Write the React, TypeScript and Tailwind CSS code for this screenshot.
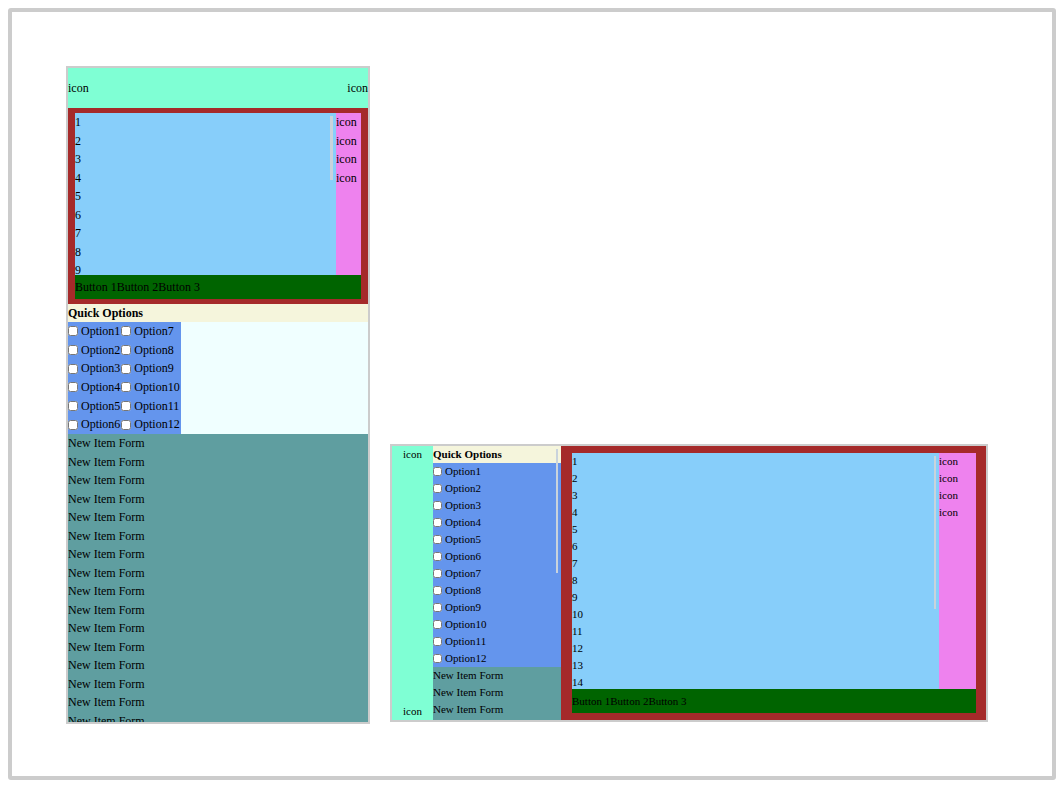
import React from 'react';

const nums = (n: number) => Array.from({ length: n }, (_, i) => i + 1);

function Checkbox({ size }: { size: string }) {
  return <input type="checkbox" className={`${size} m-0 mr-[3px] shrink-0`} />;
}

// 縦長のプレビュー
function TallPanel() {
  return (
    <div className="flex h-[658px] w-[304px] flex-col border-2 border-[#cccccc] text-[12px] leading-[18.5px]">
      <div className="flex h-10 shrink-0 items-center justify-between bg-[#7fffd4]">
        <span>icon</span>
        <span>icon</span>
      </div>

      <div className="flex h-[196px] shrink-0 flex-col bg-[#a52a2a] px-[7px] py-[5px]">
        <div className="flex min-h-0 flex-1">
          <div className="relative flex-1 overflow-hidden bg-[#87cefa]">
            {nums(12).map((n) => (
              <div key={n} className="h-[18.5px]">{n}</div>
            ))}
            <div className="absolute right-[3px] top-[3px] h-[64px] w-[3px] bg-[#c9d3dc]" />
          </div>
          <div className="w-[25px] bg-[#ee82ee]">
            {nums(4).map((n) => (
              <div key={n} className="h-[18.5px]">icon</div>
            ))}
          </div>
        </div>
        <div className="flex h-6 shrink-0 items-center bg-[#006400]">Button 1Button 2Button 3</div>
      </div>

      <div className="flex h-[18px] shrink-0 items-center bg-[#f5f5dc] font-bold">Quick Options</div>

      <div className="h-[112px] shrink-0 bg-[#f0ffff]">
        <div className="grid w-fit grid-flow-col grid-rows-6 bg-[#6495ed]">
          {nums(12).map((n) => (
            <label key={n} className="flex h-[18.67px] items-center pr-px">
              <Checkbox size="h-[10px] w-[10px]" />
              Option{n}
            </label>
          ))}
        </div>
      </div>

      <div className="min-h-0 flex-1 overflow-hidden bg-[#5f9ea0]">
        {nums(17).map((n) => (
          <div key={n} className="h-[18.5px]">New Item Form</div>
        ))}
      </div>
    </div>
  );
}

// 横長のプレビュー
function WidePanel() {
  return (
    <div className="mb-[2px] flex h-[278px] w-[598px] border-2 border-[#cccccc] text-[11px] leading-[17px]">
      <div className="flex w-[41px] shrink-0 flex-col items-center justify-between bg-[#7fffd4]">
        <span>icon</span>
        <span>icon</span>
      </div>

      <div className="relative w-[128px] shrink-0 overflow-hidden">
        <div className="h-[17px] bg-[#f5f5dc] font-bold">Quick Options</div>
        <div className="bg-[#6495ed]">
          {nums(12).map((n) => (
            <label key={n} className="flex h-[17px] items-center">
              <Checkbox size="h-[9px] w-[9px]" />
              Option{n}
            </label>
          ))}
        </div>
        <div className="bg-[#5f9ea0]">
          {nums(23).map((n) => (
            <div key={n} className="h-[17px]">New Item Form</div>
          ))}
        </div>
        <div className="absolute right-[3px] top-[3px] h-[124px] w-[2px] bg-[#c9d3dc]" />
      </div>

      <div className="flex min-w-0 flex-1 flex-col bg-[#a52a2a] py-[7px] pl-[11px] pr-[10px]">
        <div className="flex min-h-0 flex-1">
          <div className="relative flex-1 overflow-hidden bg-[#87cefa]">
            {nums(20).map((n) => (
              <div key={n} className="h-[17px]">{n}</div>
            ))}
            <div className="absolute right-[3px] top-[3px] h-[153px] w-[2px] bg-[#c9d3dc]" />
          </div>
          <div className="w-[37px] bg-[#ee82ee]">
            {nums(4).map((n) => (
              <div key={n} className="h-[17px]">icon</div>
            ))}
          </div>
        </div>
        <div className="flex h-6 shrink-0 items-center bg-[#006400]">Button 1Button 2Button 3</div>
      </div>
    </div>
  );
}

export default function App() {
  return (
    <div className="min-h-screen bg-white p-2 font-['Liberation_Serif',serif] text-black">
      <div className="flex h-[772px] w-[1048px] items-end gap-5 rounded-[3px] border-4 border-[#cccccc] pb-[52px] pl-[54px]">
        <TallPanel />
        <WidePanel />
      </div>
    </div>
  );
}
